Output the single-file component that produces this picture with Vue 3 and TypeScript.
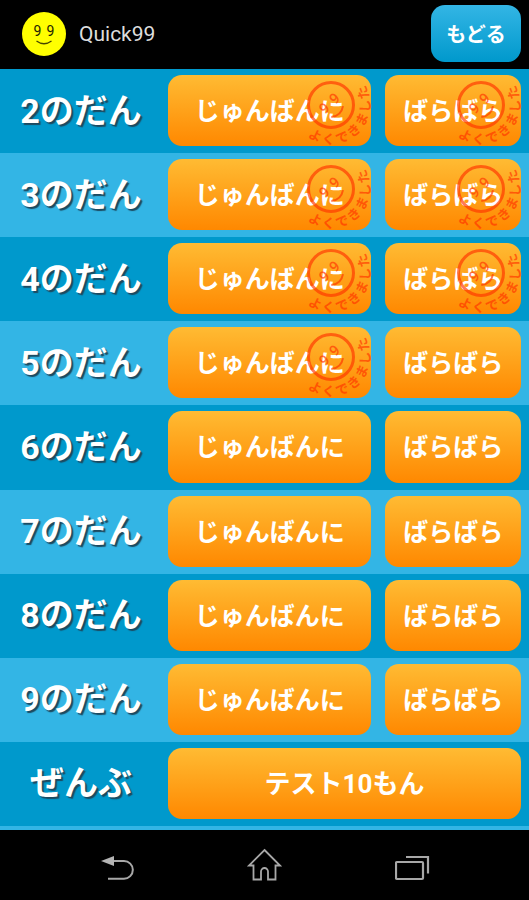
<script setup lang="ts">
interface Choice {
  text: string
  done: boolean
}

interface Course {
  label: string
  choices: Choice[]
}

interface StampGlyph {
  char: string
  angle: number
}

const courses: Course[] = [2, 3, 4, 5, 6, 7, 8, 9].map((n) => ({
  label: `${n}のだん`,
  choices: [
    { text: 'じゅんばんに', done: n <= 5 },
    { text: 'ばらばら', done: n <= 4 },
  ],
}))

// Praise text runs counter-clockwise around the stamp, glyph tops facing its centre.
const stampGlyphs: StampGlyph[] = [...'よくできました'].map((char, i) => ({
  char,
  angle: 27 - i * 23,
}))
</script>

<template>
  <div class="app">
    <header class="bar">
      <svg class="logo" viewBox="0 0 44 44" aria-hidden="true">
        <circle cx="22" cy="22" r="22" fill="#ffff00" />
        <text class="logo-eyes" x="15.500" y="24" text-anchor="middle">9</text>
        <text class="logo-eyes" x="28.500" y="24" text-anchor="middle">9</text>
        <path d="M14.500 29 Q22 34.500 29.500 29" fill="none" stroke="#444400" stroke-width="1.300" />
      </svg>
      <h1 class="title">Quick99</h1>
      <button type="button" class="back">もどる</button>
    </header>

    <main class="list">
      <section v-for="course in courses" :key="course.label" class="row">
        <h2 class="label">{{ course.label }}</h2>
        <button v-for="choice in course.choices" :key="choice.text" type="button" class="choice">
          {{ choice.text }}
          <svg v-if="choice.done" class="stamp" viewBox="-44 -44 88 88" aria-hidden="true">
            <circle r="22.500" class="line ring" />
            <g transform="rotate(-43)">
              <text class="stamp-eyes" x="-7" y="3">9</text>
              <text class="stamp-eyes" x="7" y="3">9</text>
              <path class="line" d="M-8 9 Q0 15 8 9" />
            </g>
            <text
              v-for="glyph in stampGlyphs"
              :key="glyph.angle"
              class="stamp-text"
              y="39"
              :transform="`rotate(${glyph.angle})`"
            >{{ glyph.char }}</text>
          </svg>
        </button>
      </section>
      <section class="row">
        <h2 class="label">ぜんぶ</h2>
        <button type="button" class="choice wide">テスト10もん</button>
      </section>
    </main>

    <nav class="system">
      <button type="button" class="key" aria-label="Back">
        <svg width="36" height="36" viewBox="0 0 36 36" aria-hidden="true">
          <path d="M14 14 H26 A8.800 8.800 0 0 1 26 31.700 H10" fill="none" stroke="#a8a8a8" stroke-width="2" />
          <path d="M3 14 L16 9 V19 Z" fill="#b4b4b4" />
        </svg>
      </button>
      <button type="button" class="key" aria-label="Home">
        <svg width="36" height="36" viewBox="0 0 36 36" aria-hidden="true">
          <path
            d="M18.500 3 L34 18.500 H29.500 V32.500 H22 V24.500 A3.500 3.500 0 0 0 15 24.500 V32.500 H7.500 V18.500 H3 Z"
            fill="none"
            stroke="#a8a8a8"
            stroke-width="1.800"
          />
        </svg>
      </button>
      <button type="button" class="key" aria-label="Recent apps">
        <svg width="36" height="36" viewBox="0 0 36 36" aria-hidden="true">
          <rect x="1" y="15" width="27" height="17" rx="1" fill="none" stroke="#a8a8a8" stroke-width="2.200" />
          <path d="M11 10 H33 V26.500" fill="none" stroke="#a8a8a8" stroke-width="2.200" />
        </svg>
      </button>
    </nav>
  </div>
</template>

<style>
body {
  margin: 0;
  background: #000;
}
</style>

<style scoped>
.app {
  display: flex;
  flex-direction: column;
  min-height: 100vh;
  font-family: Roboto, "Noto Sans CJK JP", sans-serif;
  color: #fff;
}

button {
  margin: 0;
  padding: 0;
  border: 0;
  color: inherit;
  font-family: inherit;
  font-weight: 700;
  cursor: pointer;
}

.bar {
  display: flex;
  align-items: center;
  gap: 13px;
  box-sizing: border-box;
  height: 69px;
  padding: 0 8px 2px 22px;
}

.logo {
  width: 44px;
  height: 44px;
}

.logo-eyes {
  font-size: 14px;
  fill: #222200;
}

.title {
  flex: 1;
  margin: 0;
  color: #ddd;
  font-size: 21px;
  font-weight: 400;
}

.back {
  width: 90px;
  height: 57px;
  border-radius: 14px;
  background: linear-gradient(#33b5e5, #0099cc);
  font-size: 20px;
}

.list {
  display: grid;
  flex: 1;
  grid-auto-rows: 1fr;
  border-bottom: 4px solid #33b5e5;
}

.row {
  display: grid;
  grid-template-columns: 154px 3fr 2fr;
  gap: 14px;
  min-height: 84px;
  box-sizing: border-box;
  padding: 6px 8px 7px 0;
  background: #0099cc;
}

.row:nth-child(even) {
  background: #33b5e5;
}

.label {
  align-self: center;
  margin: 0;
  padding-left: 8px;
  font-size: 34px;
  font-weight: 700;
  line-height: 40px;
  text-align: center;
  text-shadow: 2px 2px 1px #1c4a60;
}

.choice {
  position: relative;
  padding-bottom: 3px;
  border-radius: 14px;
  background: linear-gradient(#ffbb33, #ff8800);
  font-size: 25px;
}

.wide {
  grid-column: 2 / -1;
  font-size: 26px;
}

.stamp {
  position: absolute;
  top: -14px;
  right: -4px;
  width: 88px;
  height: 88px;
  opacity: 0.65;
  pointer-events: none;
}

.line {
  fill: none;
  stroke: #ff3300;
  stroke-width: 2;
}

.ring {
  stroke-width: 3;
}

.stamp-eyes,
.stamp-text {
  fill: #ff3300;
  font-weight: 700;
  text-anchor: middle;
}

.stamp-eyes {
  font-size: 15px;
  font-weight: 500;
}

.stamp-text {
  font-size: 13px;
}

.system {
  display: flex;
  justify-content: center;
  height: 70px;
}

.key {
  display: flex;
  flex: 0 0 28%;
  align-items: center;
  justify-content: center;
  background: transparent;
}
</style>
